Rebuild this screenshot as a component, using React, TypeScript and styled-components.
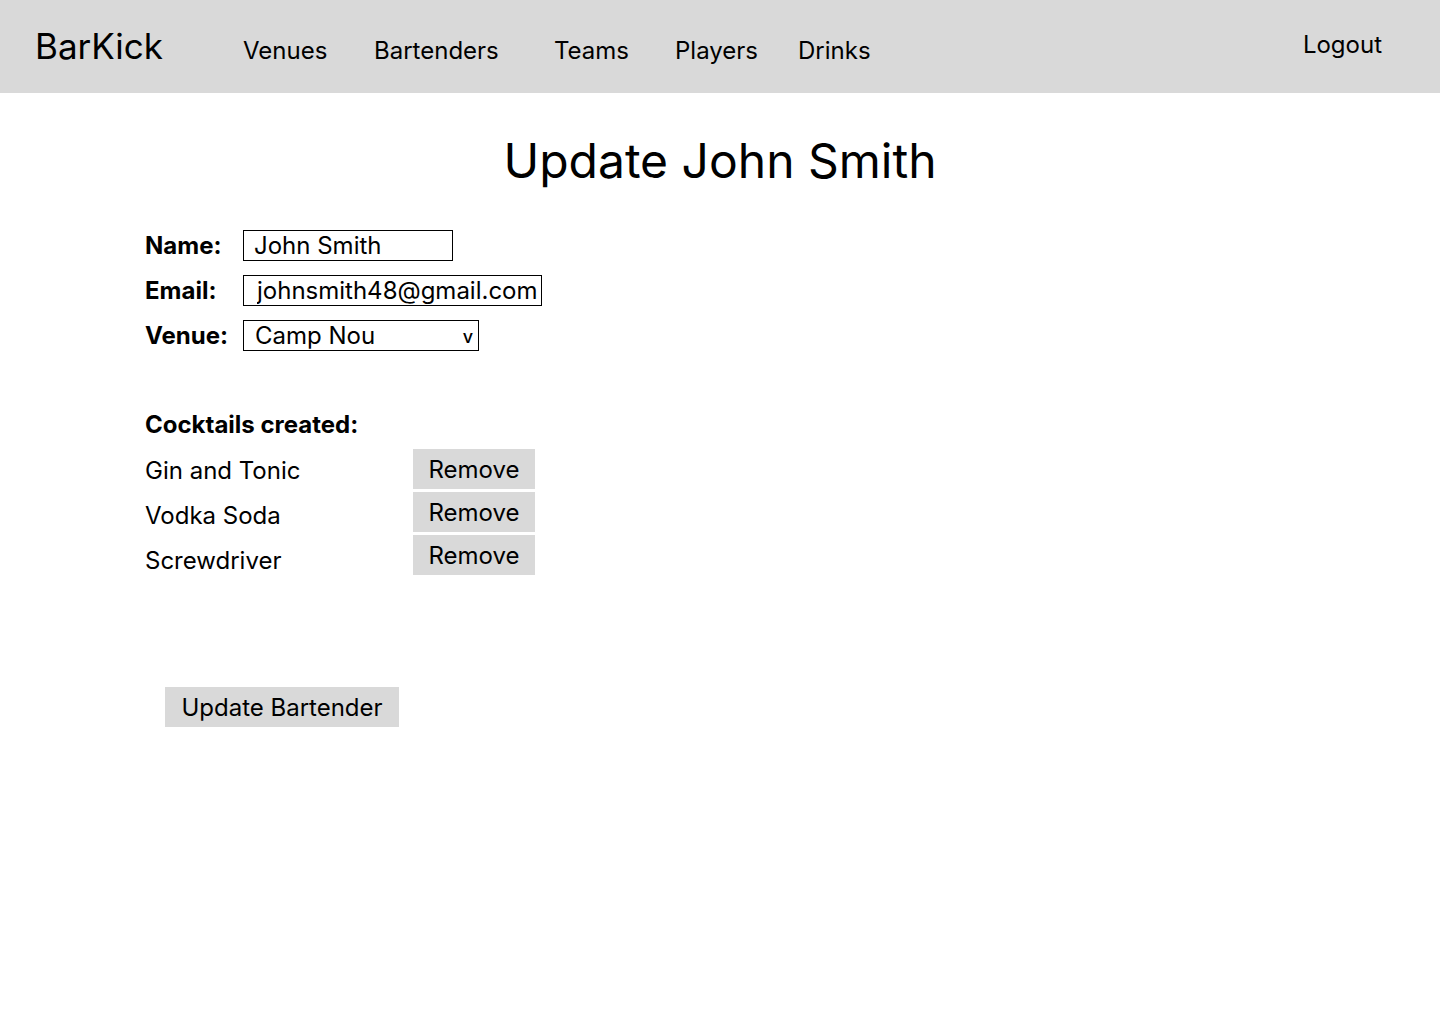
import styled, { createGlobalStyle } from "styled-components";

const GlobalStyle = createGlobalStyle`
  body {
    margin: 0;
    background: #ffffff;
    font-family: Inter, "Noto Sans", sans-serif;
    color: #000000;
  }
`;

const navLinks = [
  { label: "Venues", width: 131 },
  { label: "Bartenders", width: 180 },
  { label: "Teams", width: 121 },
  { label: "Players", width: 123 },
  { label: "Drinks", width: 100 },
];

const cocktails = ["Gin and Tonic", "Vodka Soda", "Screwdriver"];

function App() {
  return (
    <>
      <GlobalStyle />
      <Header>
        <Logo>BarKick</Logo>
        <Nav>
          {navLinks.map((link) => (
            <NavLink key={link.label} $width={link.width}>
              {link.label}
            </NavLink>
          ))}
        </Nav>
        <Logout>Logout</Logout>
      </Header>

      <Main>
        <Title>Update John Smith</Title>

        <Form>
          <FormRow>
            <Label>Name:</Label>
            <TextInput $width={210} defaultValue="John Smith" />
          </FormRow>
          <FormRow>
            <Label>Email:</Label>
            <TextInput
              $width={299}
              $indent={13}
              defaultValue="johnsmith48@gmail.com"
            />
          </FormRow>
          <FormRow>
            <Label>Venue:</Label>
            <SelectWrap>
              <Select defaultValue="Camp Nou">
                <option>Camp Nou</option>
                <option>Old Trafford</option>
                <option>Anfield</option>
              </Select>
              <Arrow>v</Arrow>
            </SelectWrap>
          </FormRow>
        </Form>

        <Cocktails>
          <SectionLabel>Cocktails created:</SectionLabel>
          <CocktailTable>
            <CocktailNames>
              {cocktails.map((name) => (
                <CocktailName key={name}>{name}</CocktailName>
              ))}
            </CocktailNames>
            <RemoveList>
              {cocktails.map((name) => (
                <GreyButton key={name} $width={122}>
                  Remove
                </GreyButton>
              ))}
            </RemoveList>
          </CocktailTable>
        </Cocktails>

        <SubmitRow>
          <GreyButton $width={234}>Update Bartender</GreyButton>
        </SubmitRow>
      </Main>
    </>
  );
}

export default App;

// header styles
const Header = styled.header`
  display: flex;
  align-items: center;
  height: 93px;
  padding: 0 58px 0 35px;
  background-color: #d9d9d9;
`;

const Logo = styled.div`
  font-size: 35px;
  line-height: 44px;
  margin-top: -2px;
  width: 208px;
`;

const Nav = styled.nav`
  display: flex;
  align-items: center;
  margin-top: 8px;
`;

const NavLink = styled.a<{ $width: number }>`
  width: ${(props) => props.$width}px;
  font-size: 24px;
  line-height: 30px;
  cursor: pointer;
`;

const Logout = styled.a`
  margin-left: auto;
  margin-top: -3px;
  font-size: 24px;
  line-height: 30px;
  cursor: pointer;
`;

// main styles
const Main = styled.main`
  padding: 0 145px;
`;

const Title = styled.h1`
  margin: 0;
  padding-top: 39px;
  text-align: center;
  font-size: 48px;
  font-weight: 400;
  line-height: 58px;
`;

const Form = styled.div`
  display: flex;
  flex-direction: column;
  row-gap: 14px;
  margin-top: 40px;
`;

const FormRow = styled.div`
  display: flex;
  align-items: center;
`;

const Label = styled.label`
  width: 98px;
  font-size: 24px;
  font-weight: 700;
  line-height: 30px;
`;

const TextInput = styled.input<{ $width: number; $indent?: number }>`
  box-sizing: border-box;
  width: ${(props) => props.$width}px;
  height: 31px;
  margin: 0;
  padding: 0 0 0 ${(props) => props.$indent ?? 10}px;
  border: 1px solid #000000;
  border-radius: 0;
  background: #ffffff;
  font-family: Inter, "Noto Sans", sans-serif;
  font-size: 24px;
  color: #000000;
  outline: none;
`;

const SelectWrap = styled.div`
  position: relative;
  width: 236px;
`;

const Select = styled.select`
  box-sizing: border-box;
  width: 100%;
  height: 31px;
  margin: 0;
  padding: 0 0 0 11px;
  border: 1px solid #000000;
  border-radius: 0;
  background: #ffffff;
  appearance: none;
  font-family: Inter, "Noto Sans", sans-serif;
  font-size: 24px;
  line-height: 29px;
  color: #000000;
  outline: none;
`;

const Arrow = styled.span`
  position: absolute;
  right: 6px;
  top: 7px;
  font-size: 18px;
  font-weight: 500;
  line-height: 20px;
  pointer-events: none;
`;

const Cocktails = styled.section`
  margin-top: 59px;
`;

const SectionLabel = styled.div`
  font-size: 24px;
  font-weight: 700;
  line-height: 30px;
`;

const CocktailTable = styled.div`
  display: flex;
  align-items: flex-start;
  margin-top: 9px;
`;

const CocktailNames = styled.div`
  display: flex;
  flex-direction: column;
  width: 268px;
  margin-top: -1px;
`;

const CocktailName = styled.div`
  font-size: 24px;
  line-height: 45px;
`;

const RemoveList = styled.div`
  display: flex;
  flex-direction: column;
  row-gap: 3px;
`;

const GreyButton = styled.button<{ $width: number }>`
  width: ${(props) => props.$width}px;
  height: 40px;
  padding: 0;
  border: none;
  border-radius: 0;
  background-color: #d9d9d9;
  font-family: Inter, "Noto Sans", sans-serif;
  font-size: 24px;
  color: #000000;
  cursor: pointer;
`;

const SubmitRow = styled.div`
  margin-top: 104px;
  padding-left: 20px;
`;
